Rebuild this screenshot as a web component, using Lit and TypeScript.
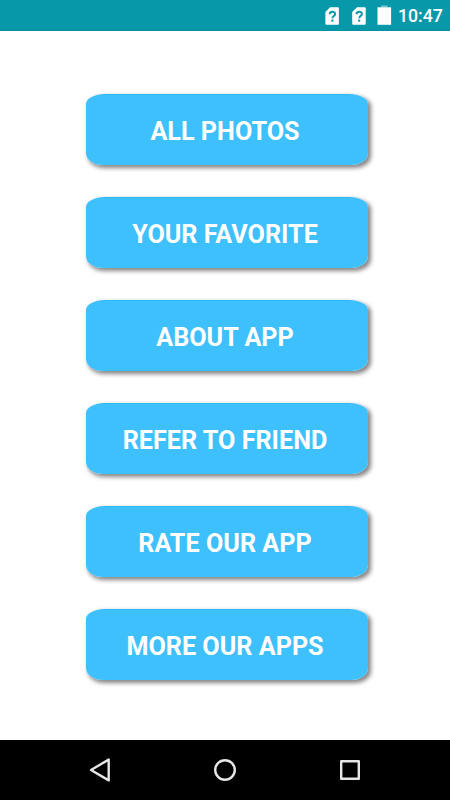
import { LitElement, html, svg, css } from "lit";
import { customElement, property } from "lit/decorators.js";

@customElement("menu-button")
class MenuButton extends LitElement {
  @property() label = "";

  static styles = css`
    :host { display: block; height: 71px; }
    .button {
      display: block;
      width: 282px;
      height: 71px;
      margin: 0;
      padding: 2px 4px 0 0;
      box-sizing: border-box;
      border: 0;
      border-radius: 19px 19px 17px 17px / 10px 10px 12px 12px;
      background: linear-gradient(#25b6f2 0, #3dc0fc 1.5px);
      box-shadow: 2.5px 2.5px 4px rgba(50, 45, 45, 0.58);
      color: #fff;
      font: 700 25.2px/72px Roboto, sans-serif;
      text-align: center;
      white-space: nowrap;
    }
  `;

  render() {
    return html`<button class="button">${this.label}</button>`;
  }
}

@customElement("app-root")
class AppRoot extends LitElement {
  static styles = css`
    :host {
      display: flex;
      flex-direction: column;
      width: 450px;
      height: 800px;
      overflow: hidden;
      background: #fff;
      font-family: Roboto, sans-serif;
    }
    .status {
      display: flex;
      justify-content: flex-end;
      flex: none;
      height: 31px;
      box-sizing: border-box;
      padding-right: 8px;
      border-bottom: 1px solid #078fa1;
      background: #0799aa;
      color: #fff;
    }
    .tray { display: block; width: 73px; height: 30px; }
    .time {
      width: 44px;
      font-size: 17.7px;
      font-weight: 500;
      line-height: 33px;
      white-space: nowrap;
    }
    .menu {
      flex: 1;
      display: flex;
      flex-direction: column;
      gap: 32.09px;
      padding: 63px 0 0 86px;
    }
    .nav {
      display: flex;
      justify-content: space-between;
      align-items: center;
      flex: none;
      height: 60px;
      box-sizing: border-box;
      padding: 0 86px;
      background: #000;
    }
    .nav svg { display: block; }
  `;

  private labels = [
    "ALL PHOTOS",
    "YOUR FAVORITE",
    "ABOUT APP",
    "REFER TO FRIEND",
    "RATE OUR APP",
    "MORE OUR APPS",
  ];

  render() {
    return html`
      <div class="status">
        <svg class="tray" viewBox="0 0 73 30">
          ${[0.4, 27.2].map(
            (x) => svg`<g transform="translate(${x} 0)">
              <path d="M4.800 7.300h7.700q1 0 1 1v15.500q0 1-1 1H1q-1 0-1-1V12.100z" fill="#fff" />
              <path d="M4.300 14.300c0-3.500 5.400-3.400 5.400-.300 0 2-2.700 2-2.700 4.200M7 19.500v2.200" fill="none" stroke="#0799aa" stroke-width="2" />
            </g>`
          )}
          <path d="M56 5.500h6.500v2H56z" fill="#72c5ce" />
          <path d="M52.500 7.300h13.600v17.500H52.500z" fill="#fff" />
        </svg>
        <span class="time">10:47</span>
      </div>
      <main class="menu">
        ${this.labels.map((l) => html`<menu-button .label=${l}></menu-button>`)}
      </main>
      <nav class="nav">
        <svg width="28" height="28" viewBox="0 0 28 28" fill="none" stroke="#e6e6e6" stroke-width="2.400" stroke-linejoin="round">
          <path d="M5 14 22.700 3.600v20.800z" />
        </svg>
        <svg width="28" height="28" viewBox="0 0 28 28" fill="none" stroke="#e6e6e6" stroke-width="2.400">
          <circle cx="14" cy="14" r="9.800" />
        </svg>
        <svg width="28" height="28" viewBox="0 0 28 28" fill="none" stroke="#e6e6e6" stroke-width="2.400" stroke-linejoin="round">
          <path d="M5.200 5.200h17.600v17.600H5.200z" />
        </svg>
      </nav>
    `;
  }
}
